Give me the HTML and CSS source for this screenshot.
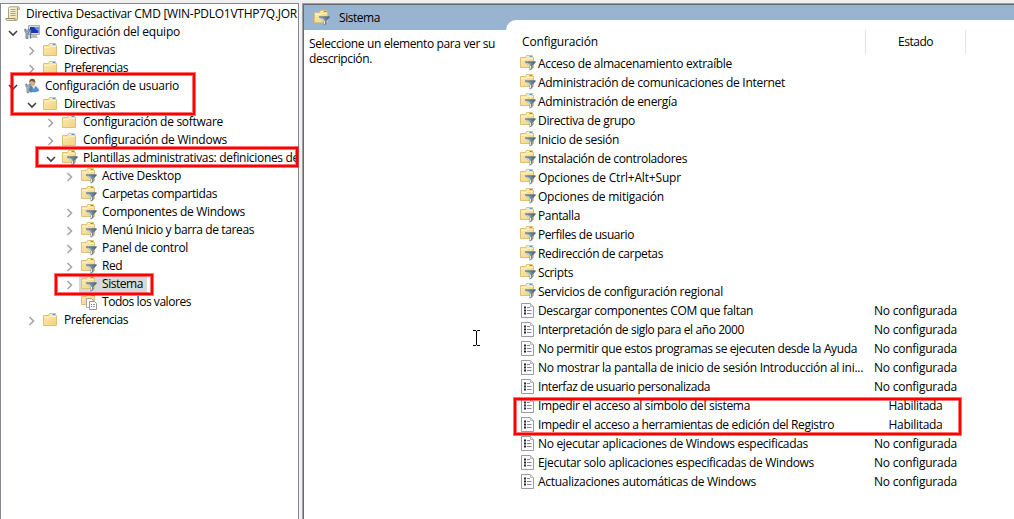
FILE: index.html
```html
<!DOCTYPE html>
<html lang="es">
<head>
<meta charset="utf-8">
<title>Editor de directivas de grupo</title>
<link rel="stylesheet" href="styles.css">
</head>
<body>
<svg class="defs" aria-hidden="true">
  <linearGradient id="paper" x1="0" y1="0" x2="1" y2="1"><stop offset="0" stop-color="#fffbe0"/><stop offset="1" stop-color="#e9d9a4"/></linearGradient>
  <linearGradient id="gold" x1="0" y1="0" x2="1" y2="1"><stop offset="0" stop-color="#fdebb0"/><stop offset="1" stop-color="#f2d283"/></linearGradient>
  <linearGradient id="steel" x1="0" y1="0" x2="1" y2="0"><stop offset="0" stop-color="#b4c6d4"/><stop offset=".45" stop-color="#7f97aa"/><stop offset="1" stop-color="#415b72"/></linearGradient>
  <symbol id="folder" viewBox="0 0 16 16">
    <path d="M1.5 3.5H6.5L7.5 1.5H13.5V3.5H14.5V13.5H1.5Z" fill="url(#gold)" stroke="#dfc07a"/>
    <path d="M8 2.5H13" stroke="#fff7d8"/><path d="M10.5 2.5H13" stroke="#4d9be6"/>
    <path d="M2 5.5H7L8.5 4.5H14" fill="none" stroke="#fff2c4"/>
  </symbol>
  <symbol id="filter" viewBox="0 0 16 16">
    <path d="M.5 2.5H5.5L6.5 .5H12.5V2.5H13.5V12.5H.5Z" fill="url(#gold)" stroke="#dfc07a"/>
    <path d="M7 1.5H12" stroke="#fff7d8"/><path d="M9.5 1.5H12" stroke="#4d9be6"/>
    <path d="M1 4.5H6L7.5 3.500H13" fill="none" stroke="#fff2c4"/>
    <path d="M5 6.500H15.500V7.500L12.500 10.800V14L9.500 15.800V11L5 7.500Z" fill="url(#steel)"/>
    <path d="M5 7H15.500" stroke="#566f84"/><path d="M7.500 8.500L10.500 11V14" fill="none" stroke="#dce7ee"/>
  </symbol>
  <symbol id="pages" viewBox="0 0 16 16">
    <path d="M.5 2.500H5.500L6.500.500H13.500V10.500H.5Z" fill="url(#gold)" stroke="#dfc07a"/>
    <path d="M10.500 1.500H12.500" stroke="#4d9be6"/>
    <path d="M5.500 4.500H10.500L12 6V13.500H5.500Z" fill="#fff" stroke="#a4a4a4"/>
    <path d="M8.500 7.500H13.500L15.500 9.500V15.500H8.500Z" fill="#fff" stroke="#969696"/>
    <path d="M10 10.500H11M10 12.500H11" stroke="#66667a"/><path d="M12 10.500H14M12 12.500H14" stroke="#9999ad"/>
  </symbol>
  <symbol id="scroll" viewBox="0 0 16 16">
    <path d="M3.500 2.500Q3.500.800 5 .800H13.500Q14.800 1.500 14.300 3.500H12.500V13Q12.500 14.500 11 14.500H2Q.800 14.500 .800 12.500H3.500Z" fill="url(#paper)" stroke="#aaa184"/>
    <path d="M5.500 3.500H10.500M5.500 5.500H10.500M5.500 7.500H10.500M5.500 9.500H10.500" stroke="#aaa28a"/>
    <path d="M1 12.500H10V14M12.500 3.500V1.500" fill="none" stroke="#958c70"/>
  </symbol>
  <symbol id="computer" viewBox="0 0 16 16">
    <path d="M4.500 1.500H15.500V10.500H4.500Z" fill="#d9dde5" stroke="#a6acb8"/>
    <path d="M6 3H14.500V9H6Z" fill="#1b36b4"/><path d="M10 3H14.500V7Q12 6 10 3" fill="#6c94ea"/>
    <path d="M8 11H12.500L14 14H7Z" fill="#b8bdc7"/>
    <path d="M.8 5V7Q1 8.500 2 8.800V14.500H4V8.800Q5.200 8.300 5.300 7V5L4 5V7H2V5Z" fill="#9eb6c7" stroke="#536f84" stroke-width=".7"/>
    <path d="M6.500 6V14.500" stroke="#61798a" stroke-width="1.600"/>
  </symbol>
  <symbol id="user" viewBox="0 0 16 16">
    <path d="M5 13Q5 8 9 8Q14.500 8.500 14.500 13Q10 15 5 13" fill="#5793cc" stroke="#447eae" stroke-width=".6"/>
    <path d="M8 8L10 11 11 8" fill="#eaf5ff"/>
    <ellipse cx="8.300" cy="4.600" rx="2.900" ry="3.700" fill="#d9ae80"/>
    <path d="M5.400 4.500Q5 .8 8.300.7Q11.700.800 11.200 5Q9.500 3 7 3Z" fill="#6b5947"/>
    <path d="M1.800 6V8Q2 9.300 3 9.500V14.700H5V9.500Q6 9 6.200 8V6L5 6V8H3V6Z" fill="#b4c7d2" stroke="#536f84" stroke-width=".7"/>
    <path d="M7 8V14.500" stroke="#61798a" stroke-width="1.300"/>
  </symbol>
  <symbol id="policy" viewBox="0 0 14 16">
    <path d="M.500 1.500H9.500L12.500 4.500V15.500H.500Z" fill="#fcfcfc" stroke="#9b9b9b"/>
    <path d="M9.500 1.500V4.500H12.500" fill="#e5e5e5" stroke="#b8b8b8"/>
    <path d="M3 5.500H5M3 8.500H5M3 11.500H5" stroke="#242434" stroke-width="2"/>
    <path d="M6 5.500H9M6 8.500H10.500M6 11.500H10.500" stroke="#8585a6"/>
  </symbol>
  <symbol id="closed" viewBox="0 0 10 10"><path d="M2.500 1L6.500 5L2.500 9" fill="none" stroke="#a6a6a6" stroke-width="1.600"/></symbol>
  <symbol id="open" viewBox="0 0 10 10"><path d="M1 3L5 7L9 3" fill="none" stroke="#404040" stroke-width="1.600"/></symbol>
</svg>
<div class="window">
  <nav class="tree">
    <div class="node root"><svg class="icon"><use href="#scroll"/></svg><span data-w="271">Directiva Desactivar CMD [WIN-PDLO1VTHP7Q.JOR</span></div>
    <div class="node l1"><svg class="arrow"><use href="#open"/></svg><svg class="icon"><use href="#computer"/></svg><span data-w="135">Configuración del equipo</span></div>
    <div class="node l2"><svg class="arrow"><use href="#closed"/></svg><svg class="icon"><use href="#folder"/></svg><span data-w="51">Directivas</span></div>
    <div class="node l2"><svg class="arrow"><use href="#closed"/></svg><svg class="icon"><use href="#folder"/></svg><span data-w="64">Preferencias</span></div>
    <div class="node l1"><svg class="arrow"><use href="#open"/></svg><svg class="icon"><use href="#user"/></svg><span data-w="134">Configuración de usuario</span></div>
    <div class="node l2"><svg class="arrow"><use href="#open"/></svg><svg class="icon"><use href="#folder"/></svg><span data-w="51">Directivas</span></div>
    <div class="node l3"><svg class="arrow"><use href="#closed"/></svg><svg class="icon"><use href="#folder"/></svg><span data-w="140">Configuración de software</span></div>
    <div class="node l3"><svg class="arrow"><use href="#closed"/></svg><svg class="icon"><use href="#folder"/></svg><span data-w="144">Configuración de Windows</span></div>
    <div class="node l3"><svg class="arrow"><use href="#open"/></svg><svg class="icon badge"><use href="#filter"/></svg><span data-w="216">Plantillas administrativas: definiciones de</span></div>
    <div class="node l4"><svg class="arrow"><use href="#closed"/></svg><svg class="icon badge"><use href="#filter"/></svg><span data-w="79">Active Desktop</span></div>
    <div class="node l4"><svg class="arrow"></svg><svg class="icon badge"><use href="#filter"/></svg><span data-w="115">Carpetas compartidas</span></div>
    <div class="node l4"><svg class="arrow"><use href="#closed"/></svg><svg class="icon badge"><use href="#filter"/></svg><span data-w="143">Componentes de Windows</span></div>
    <div class="node l4"><svg class="arrow"><use href="#closed"/></svg><svg class="icon badge"><use href="#filter"/></svg><span data-w="152">Menú Inicio y barra de tareas</span></div>
    <div class="node l4"><svg class="arrow"><use href="#closed"/></svg><svg class="icon badge"><use href="#filter"/></svg><span data-w="86">Panel de control</span></div>
    <div class="node l4"><svg class="arrow"><use href="#closed"/></svg><svg class="icon badge"><use href="#filter"/></svg><span data-w="20">Red</span></div>
    <div class="node l4"><svg class="arrow"><use href="#closed"/></svg><div class="selected"><svg class="icon badge"><use href="#filter"/></svg><span data-w="41">Sistema</span></div></div>
    <div class="node l4"><svg class="arrow"></svg><svg class="icon badge"><use href="#pages"/></svg><span data-w="89">Todos los valores</span></div>
    <div class="node l2"><svg class="arrow"><use href="#closed"/></svg><svg class="icon"><use href="#folder"/></svg><span data-w="64">Preferencias</span></div>
  </nav>
  <main class="panel">
    <section class="details">
      <header class="title"><svg class="icon"><use href="#filter"/></svg><span data-w="41">Sistema</span></header>
      <p class="hint"><span data-w="186">Seleccione un elemento para ver su</span><br><span data-w="63">descripción.</span></p>
    </section>
    <section class="content">
      <div class="sheet">
        <div class="head"><div class="col-name"><span data-w="76">Configuración</span></div><div class="col-state"><span data-w="35">Estado</span></div></div>
        <div class="row"><svg class="icon"><use href="#filter"/></svg><div class="name"><span data-w="194">Acceso de almacenamiento extraíble</span></div></div>
        <div class="row"><svg class="icon"><use href="#filter"/></svg><div class="name"><span data-w="247">Administración de comunicaciones de Internet</span></div></div>
        <div class="row"><svg class="icon"><use href="#filter"/></svg><div class="name"><span data-w="139">Administración de energía</span></div></div>
        <div class="row"><svg class="icon"><use href="#filter"/></svg><div class="name"><span data-w="97">Directiva de grupo</span></div></div>
        <div class="row"><svg class="icon"><use href="#filter"/></svg><div class="name"><span data-w="81">Inicio de sesión</span></div></div>
        <div class="row"><svg class="icon"><use href="#filter"/></svg><div class="name"><span data-w="149">Instalación de controladores</span></div></div>
        <div class="row"><svg class="icon"><use href="#filter"/></svg><div class="name"><span data-w="143">Opciones de Ctrl+Alt+Supr</span></div></div>
        <div class="row"><svg class="icon"><use href="#filter"/></svg><div class="name"><span data-w="126">Opciones de mitigación</span></div></div>
        <div class="row"><svg class="icon"><use href="#filter"/></svg><div class="name"><span data-w="42">Pantalla</span></div></div>
        <div class="row"><svg class="icon"><use href="#filter"/></svg><div class="name"><span data-w="96">Perfiles de usuario</span></div></div>
        <div class="row"><svg class="icon"><use href="#filter"/></svg><div class="name"><span data-w="125">Redirección de carpetas</span></div></div>
        <div class="row"><svg class="icon"><use href="#filter"/></svg><div class="name"><span data-w="35">Scripts</span></div></div>
        <div class="row"><svg class="icon"><use href="#filter"/></svg><div class="name"><span data-w="185">Servicios de configuración regional</span></div></div>
        <div class="row"><svg class="icon doc"><use href="#policy"/></svg><div class="name"><span data-w="215">Descargar componentes COM que faltan</span></div><div class="state"><span data-w="83">No configurada</span></div></div>
        <div class="row"><svg class="icon doc"><use href="#policy"/></svg><div class="name"><span data-w="206">Interpretación de siglo para el año 2000</span></div><div class="state"><span data-w="83">No configurada</span></div></div>
        <div class="row"><svg class="icon doc"><use href="#policy"/></svg><div class="name"><span data-w="319">No permitir que estos programas se ejecuten desde la Ayuda</span></div><div class="state"><span data-w="83">No configurada</span></div></div>
        <div class="row"><svg class="icon doc"><use href="#policy"/></svg><div class="name"><span data-w="325">No mostrar la pantalla de inicio de sesión Introducción al ini...</span></div><div class="state"><span data-w="83">No configurada</span></div></div>
        <div class="row"><svg class="icon doc"><use href="#policy"/></svg><div class="name"><span data-w="172">Interfaz de usuario personalizada</span></div><div class="state"><span data-w="83">No configurada</span></div></div>
        <div class="row"><svg class="icon doc"><use href="#policy"/></svg><div class="name"><span data-w="212">Impedir el acceso al símbolo del sistema</span></div><div class="state"><span data-w="54">Habilitada</span></div></div>
        <div class="row"><svg class="icon doc"><use href="#policy"/></svg><div class="name"><span data-w="296">Impedir el acceso a herramientas de edición del Registro</span></div><div class="state"><span data-w="54">Habilitada</span></div></div>
        <div class="row"><svg class="icon doc"><use href="#policy"/></svg><div class="name"><span data-w="270">No ejecutar aplicaciones de Windows especificadas</span></div><div class="state"><span data-w="83">No configurada</span></div></div>
        <div class="row"><svg class="icon doc"><use href="#policy"/></svg><div class="name"><span data-w="276">Ejecutar solo aplicaciones especificadas de Windows</span></div><div class="state"><span data-w="83">No configurada</span></div></div>
        <div class="row"><svg class="icon doc"><use href="#policy"/></svg><div class="name"><span data-w="218">Actualizaciones automáticas de Windows</span></div><div class="state"><span data-w="83">No configurada</span></div></div>
      </div>
    </section>
  </main>
</div>
<div class="mark mark-user"></div>
<div class="mark mark-templates"></div>
<div class="mark mark-system"></div>
<div class="mark mark-enabled"></div>
<svg class="cursor" viewBox="0 0 7 16"><path d="M0 .5H3M4 .5H7M3.500 1V15M0 15.500H3M4 15.500H7" fill="none" stroke="#000"/></svg>
<script src="fit.js"></script>
</body>
</html>
```
FILE: styles.css
```css
* { box-sizing: border-box; }
body {
  margin: 0;
  height: 519px;
  overflow: hidden;
  position: relative;
  background: #f0f0f0;
  color: #000;
  font: 12px/18px "Open Sans", "Noto Sans", sans-serif;
}
.defs { position: absolute; width: 0; height: 0; }
.window { display: flex; gap: 3px; height: 519px; padding-top: 3px; }
.icon { display: block; flex: none; width: 16px; height: 16px; }
.arrow { display: block; flex: none; width: 10px; height: 10px; margin: 2px 5px 0 0; }
span { white-space: nowrap; }

.tree {
  flex: none;
  width: 299px;
  padding-top: 1px;
  overflow: hidden;
  background: #fff;
  border: 1px solid #828790;
  border-bottom: 0;
}
.node { display: flex; align-items: center; height: 18px; white-space: nowrap; }
.node .icon { margin-right: 6px; }
.node .badge { margin: 0 5px 0 1px; }
.root { padding-left: 4px; }
.root .icon { margin-right: 5px; }
.l1 { padding-left: 7px; }
.l1 .arrow { margin-right: 6px; }
.l1 .icon { margin-right: 5px; }
.l2 { padding-left: 26px; }
.l3 { padding-left: 45px; }
.l4 { padding-left: 64px; }
.selected { display: flex; align-items: center; height: 18px; margin-left: -1px; padding: 0 4px 0 1px; background: #d9d9d9; }

.panel {
  flex: 1;
  display: flex;
  background: #fff;
  border-top: 1px solid #a0a0a0;
  border-left: 1px solid #a0a0a0;
  box-shadow: inset 1px 1px #696969;
  padding: 1px 0 0 1px;
}
.details { flex: none; width: 202px; }
.title { display: flex; align-items: center; height: 25px; padding: 1px 0 0 10px; background: #99b4d1; }
.title .icon { margin-right: 9px; }
.hint { margin: 6px 0 0 5px; line-height: 15px; }
.content { flex: 1; background: linear-gradient(#99b4d1 25px, #fff 25px); padding-top: 15px; }
.sheet { height: 499px; background: #fff; border-top-left-radius: 10px; padding-top: 10px; }
.head { display: flex; height: 24px; line-height: 24px; }
.col-name { width: 360px; height: 24px; padding-left: 16px; border-right: 1px solid #e5e5e5; }
.col-state { width: 100px; height: 24px; text-align: center; border-right: 1px solid #e5e5e5; }
.row { display: flex; height: 19px; line-height: 19px; padding-left: 14px; }
.row .icon { margin-top: 1px; }
.row .doc { width: 14px; margin: 1px 0 0 1px; }
.row .name { width: 329px; padding-left: 2px; }
.row .doc + .name { width: 330px; padding-left: 3px; }
.state { width: 101px; text-align: center; }

.mark {
  position: absolute;
  border: 2px solid #f00;
  box-shadow: 0 0 0 1px rgba(255, 0, 0, .55), inset 0 0 0 1px rgba(255, 0, 0, .55);
}
.mark-user { left: 11px; top: 73px; width: 184px; height: 42px; }
.mark-templates { left: 36px; top: 147px; width: 262px; height: 20px; }
.mark-system { left: 55px; top: 274px; width: 98px; height: 21px; }
.mark-enabled { left: 514px; top: 398px; width: 447px; height: 37px; }
.cursor { position: absolute; left: 473px; top: 330px; width: 7px; height: 16px; }
```
FILE: fit.js
```js
document.querySelectorAll("[data-w]").forEach(function (label) {
  var extra = Number(label.dataset.w) - label.getBoundingClientRect().width;
  label.style.letterSpacing = extra / label.textContent.length + "px";
});
```
